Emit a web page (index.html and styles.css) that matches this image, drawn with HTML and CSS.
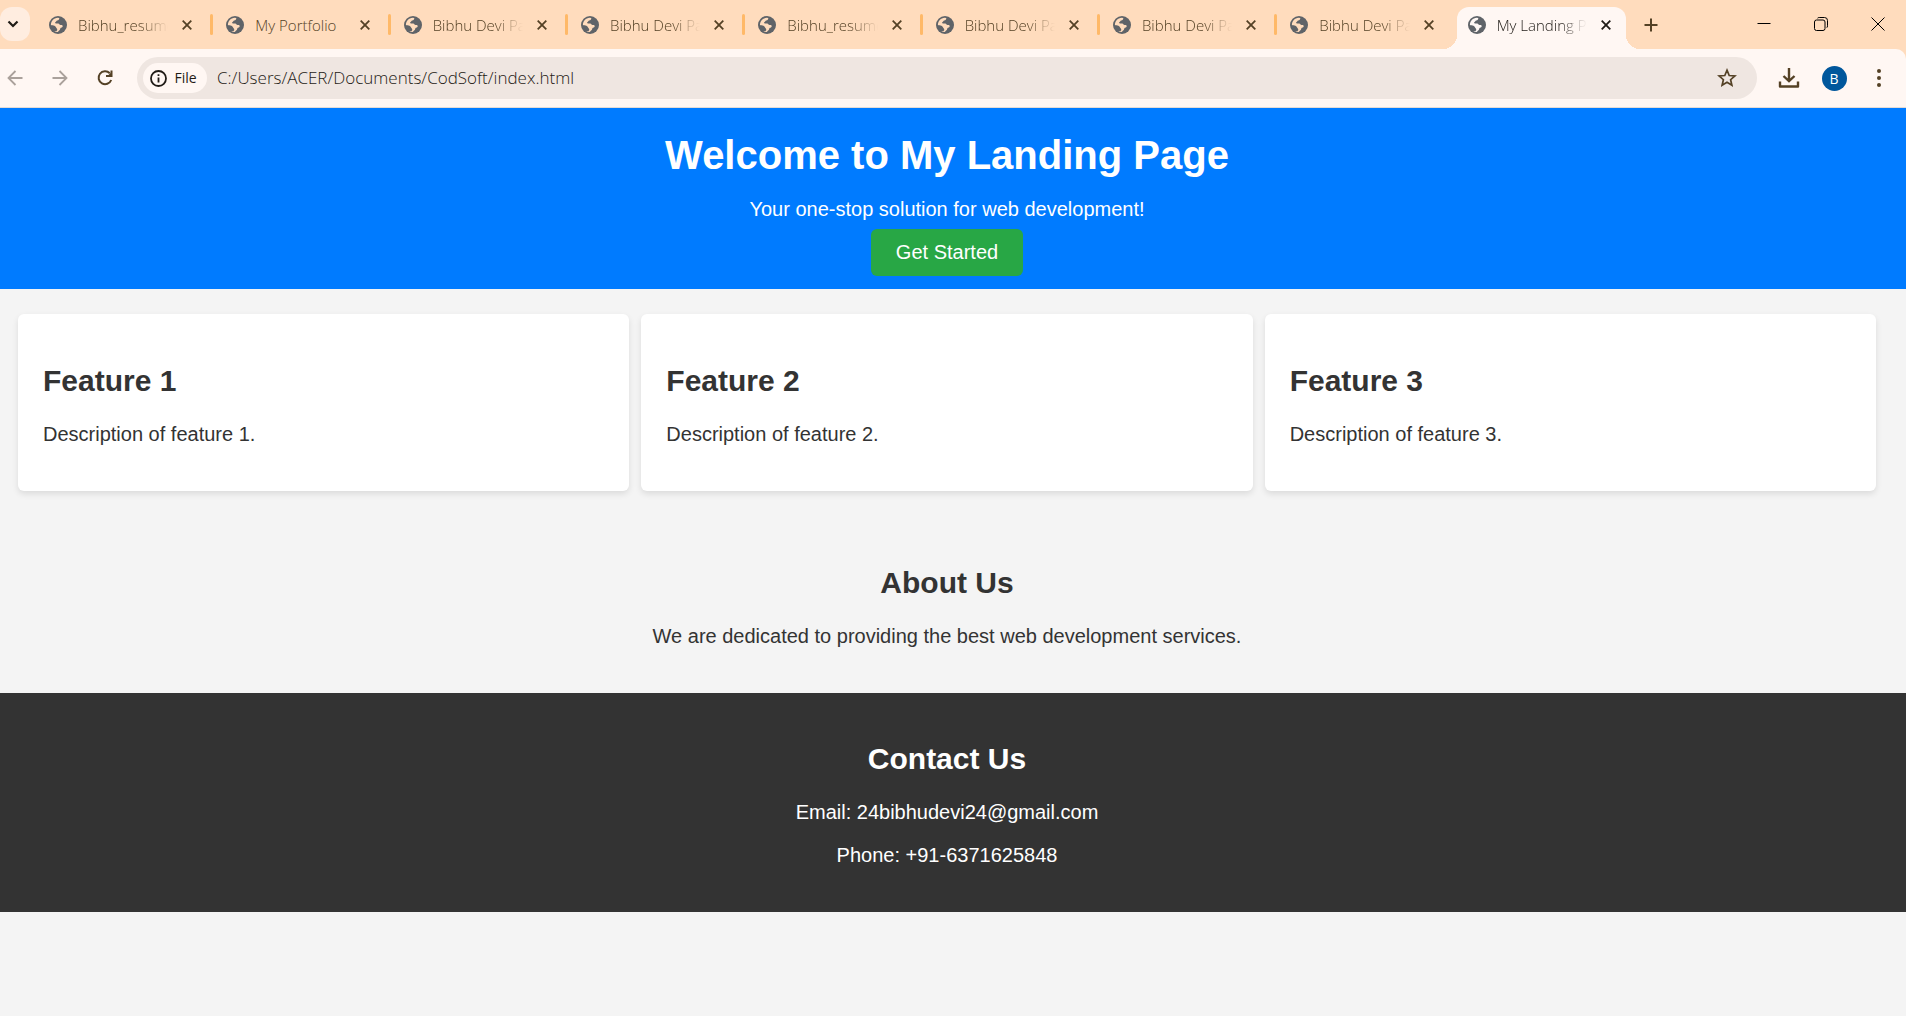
FILE: index.html
```html
<!DOCTYPE html>
<html lang="en">
<head>
<meta charset="utf-8">
<meta name="viewport" content="width=device-width, initial-scale=1">
<title>My Landing Page</title>
<link rel="stylesheet" href="styles.css">
</head>
<body>
<svg class="defs" aria-hidden="true">
  <symbol id="globe" viewBox="0 0 18 18">
    <circle cx="9" cy="9" r="9" fill="#5f6368"/>
    <path d="M1.900 8.900C1.900 5.200 4.800 2 8.700 1.800L10.300 2C10.300 3.400 9.600 4.300 8.200 4.400C7.300 4.500 7.300 5.600 6.500 6.100C5.700 6.600 6.100 7.400 7 7.400H9.300C10.100 7.400 10.300 8.300 10.900 8.700C11.600 9.100 13 8.600 13.500 9.400C14.200 10.600 13.200 11.600 12 11.800C11.200 12 11.400 13 10.900 13.700C10.400 14.400 9.300 14.600 9 16.100C7.700 16.100 6.300 15.700 5.200 15L7.500 14.900C8.600 14.500 8.300 13.200 7.800 12.500C7 11.600 6.700 10.300 5.400 9.700C4.300 9.200 3.100 9.400 1.900 8.900Z" fill="var(--tab)"/>
  </symbol>
  <symbol id="cross" viewBox="0 0 10 10">
    <path d="M.7.7 9.300 9.300M9.300.7.7 9.300" fill="none" stroke="currentColor" stroke-width="1.800"/>
  </symbol>
</svg>

<div class="browser">
  <div class="tabstrip">
    <button class="tab-search" aria-label="Search tabs"><svg width="12" height="8" viewBox="0 0 12 8"><path d="M1.500 1.500 6 6 10.500 1.500" fill="none" stroke="currentColor" stroke-width="2.200"/></svg></button>
    <div class="tabs">
      <div class="tab"><svg class="globe"><use href="#globe"/></svg><span class="tab-title fade">Bibhu_resume</span><button class="tab-close" aria-label="Close tab"><svg><use href="#cross"/></svg></button></div>
      <div class="tab"><svg class="globe"><use href="#globe"/></svg><span class="tab-title">My Portfolio</span><button class="tab-close" aria-label="Close tab"><svg><use href="#cross"/></svg></button></div>
      <div class="tab"><svg class="globe"><use href="#globe"/></svg><span class="tab-title fade">Bibhu Devi Pati</span><button class="tab-close" aria-label="Close tab"><svg><use href="#cross"/></svg></button></div>
      <div class="tab"><svg class="globe"><use href="#globe"/></svg><span class="tab-title fade">Bibhu Devi Pati</span><button class="tab-close" aria-label="Close tab"><svg><use href="#cross"/></svg></button></div>
      <div class="tab"><svg class="globe"><use href="#globe"/></svg><span class="tab-title fade">Bibhu_resume</span><button class="tab-close" aria-label="Close tab"><svg><use href="#cross"/></svg></button></div>
      <div class="tab"><svg class="globe"><use href="#globe"/></svg><span class="tab-title fade">Bibhu Devi Pati</span><button class="tab-close" aria-label="Close tab"><svg><use href="#cross"/></svg></button></div>
      <div class="tab"><svg class="globe"><use href="#globe"/></svg><span class="tab-title fade">Bibhu Devi Pati</span><button class="tab-close" aria-label="Close tab"><svg><use href="#cross"/></svg></button></div>
      <div class="tab"><svg class="globe"><use href="#globe"/></svg><span class="tab-title fade">Bibhu Devi Pati</span><button class="tab-close" aria-label="Close tab"><svg><use href="#cross"/></svg></button></div>
      <div class="tab active"><svg class="globe"><use href="#globe"/></svg><span class="tab-title fade">My Landing Page</span><button class="tab-close" aria-label="Close tab"><svg><use href="#cross"/></svg></button></div>
    </div>
    <button class="new-tab" aria-label="New tab"><svg width="14" height="14" viewBox="0 0 14 14"><path d="M7 .5V13.500M.5 7H13.500" stroke="currentColor" stroke-width="2"/></svg></button>
    <div class="window-controls">
      <button aria-label="Minimize"><svg width="14" height="14" viewBox="0 0 14 14"><path d="M.5 6.500H13.500" stroke="currentColor"/></svg></button>
      <button aria-label="Restore"><svg width="14" height="14" viewBox="0 0 14 14" fill="none" stroke="currentColor"><rect x=".5" y="3" width="10.500" height="10.500" rx="2"/><path d="M3.500 1.200Q4 .5 5.200 .5H10.500A3 3 0 0 1 13.500 3.500V8.800Q13.500 10.300 12.800 10.700"/></svg></button>
      <button aria-label="Close"><svg width="14" height="14" viewBox="0 0 14 14"><path d="M.5.5 13.500 13.500M13.500.5.5 13.500" stroke="currentColor"/></svg></button>
    </div>
  </div>
  <div class="toolbar">
    <div class="toolbar-group nav">
      <button class="muted" aria-label="Back"><svg width="16" height="16" viewBox="0 0 16 16" fill="none" stroke="currentColor" stroke-width="1.800"><path d="M8.500 1 1.500 8 8.500 15M1.500 8H15.500"/></svg></button>
      <button class="muted" aria-label="Forward"><svg width="16" height="16" viewBox="0 0 16 16" fill="none" stroke="currentColor" stroke-width="1.800"><path d="M7.500 1 14.500 8 7.500 15M14.500 8H.5"/></svg></button>
      <button aria-label="Reload"><svg width="16" height="16" viewBox="0 0 16 16"><path d="M12.800 3.200A6.500 6.500 0 1 0 14.200 10" fill="none" stroke="currentColor" stroke-width="2"/><path d="M15.500.5V7H9V5H11.500L13.500 3V.5Z" fill="currentColor"/></svg></button>
    </div>
    <div class="address">
      <button class="chip"><svg width="17" height="17" viewBox="0 0 17 17"><circle cx="8.500" cy="8.500" r="7.500" fill="none" stroke="currentColor" stroke-width="1.800"/><path d="M8.500 7.500V12.500M8.500 4.300V6" stroke="currentColor" stroke-width="1.800"/></svg>File</button>
      <input class="url" type="text" aria-label="Address" value="C:/Users/ACER/Documents/CodSoft/index.html">
      <button class="star" aria-label="Bookmark this page"><svg width="20" height="20" viewBox="0 0 20 20"><path d="M10 2.200 12.200 7.500 17.900 8 13.600 11.700 14.900 17.300 10 14.300 5.100 17.300 6.400 11.700 2.100 8 7.800 7.500Z" fill="none" stroke="currentColor" stroke-width="1.700"/></svg></button>
    </div>
    <div class="toolbar-group actions">
      <button aria-label="Downloads"><svg width="22" height="22" viewBox="0 0 22 22" fill="none" stroke="currentColor" stroke-width="2.400"><path d="M11 1V14M5.500 9 11 14.200 16.500 9"/><path d="M2 14.500V19.500H20V14.500" stroke-linejoin="round"/></svg></button>
      <button class="avatar-button" aria-label="Profile"><span class="avatar">B</span></button>
      <button aria-label="Menu"><svg width="4" height="18" viewBox="0 0 4 18" fill="currentColor"><circle cx="2" cy="2" r="2"/><circle cx="2" cy="9" r="2"/><circle cx="2" cy="16" r="2"/></svg></button>
    </div>
  </div>
</div>

<header class="hero">
  <h1>Welcome to My Landing Page</h1>
  <p>Your one-stop solution for web development!</p>
  <a class="cta" href="#features">Get Started</a>
</header>

<main>
  <section class="features" id="features">
    <article class="feature"><h2>Feature 1</h2><p>Description of feature 1.</p></article>
    <article class="feature"><h2>Feature 2</h2><p>Description of feature 2.</p></article>
    <article class="feature"><h2>Feature 3</h2><p>Description of feature 3.</p></article>
  </section>
  <section class="band about">
    <h2>About Us</h2>
    <p>We are dedicated to providing the best web development services.</p>
  </section>
</main>

<footer class="band contact">
  <h2>Contact Us</h2>
  <p>Email: 24bibhudevi24@gmail.com</p>
  <p>Phone: +91-6371625848</p>
</footer>
</body>
</html>
```
FILE: styles.css
```css
* { box-sizing: border-box; }

body {
  margin: 0;
  background: #f4f4f4;
  color: #333;
  font: 20px/23px "Liberation Sans", Arial, sans-serif;
}

button {
  display: flex;
  align-items: center;
  justify-content: center;
  padding: 0;
  border: 0;
  background: none;
  color: inherit;
  font: inherit;
}

.defs { display: none; }

/* Browser frame */
.browser {
  --strip: #ffdcbd;
  --surface: #fff7f3;
  background: var(--strip);
  color: #544125;
  font: 14px/20px "Open Sans", "Noto Sans", sans-serif;
}

.tabstrip { display: flex; height: 49px; }

.tab-search {
  width: 30px;
  height: 34px;
  margin: 7px 5px 0 0;
  padding-right: 4px;
  border-radius: 12px;
  background: #ffede0;
  color: #1f1b16;
}

.tabs { display: flex; flex: 1; min-width: 0; }

.tab {
  --tab: var(--strip);
  position: relative;
  display: flex;
  flex: 1 1 0;
  align-items: center;
  min-width: 0;
  padding: 0 20px 0 14px;
}

.tab:not(.active):not(:nth-last-child(2))::after {
  content: "";
  position: absolute;
  top: 14px;
  right: -1px;
  width: 3px;
  height: 21px;
  border-radius: 2px;
  background: #ffb968;
}

.globe { flex: none; width: 18px; height: 18px; }

.tab-title {
  flex: 1;
  min-width: 0;
  margin: 0 14px 0 11px;
  overflow: hidden;
  font-size: 15px;
  font-weight: 300;
  white-space: nowrap;
}

.fade {
  -webkit-mask-image: linear-gradient(to left, transparent, #000 28px);
  mask-image: linear-gradient(to left, transparent, #000 28px);
}

.tab-close svg { width: 10px; height: 10px; }

.tab.active { --tab: var(--surface); color: #1f1b16; }
.tab.active > * { z-index: 1; }

.tab.active::before {
  content: "";
  position: absolute;
  inset: 7px 5px 0 3px;
  border-radius: 12px 12px 0 0;
  background: var(--surface);
}

.tab.active::after {
  content: "";
  position: absolute;
  right: -9px;
  bottom: 0;
  left: -11px;
  height: 14px;
  background:
    radial-gradient(circle at 0 0, transparent 14px, var(--surface) 14px) left / 14px 14px no-repeat,
    radial-gradient(circle at 100% 0, transparent 14px, var(--surface) 14px) right / 14px 14px no-repeat;
}

.new-tab { width: 40px; margin-right: 64px; }
.window-controls { display: flex; color: #000; }
.window-controls button { width: 57px; height: 47px; }

.toolbar {
  display: flex;
  padding: 8px 12px 8px 0;
  border-bottom: 1px solid #e3dbd6;
  border-radius: 0 10px 0 0;
  background: var(--surface);
}

.toolbar-group { display: flex; gap: 15px; }
.toolbar-group button { width: 30px; }
.nav { margin-right: 17px; }
.actions { margin-left: 17px; }
.muted { color: #aaa19b; }

.address {
  display: flex;
  flex: 1;
  align-items: center;
  min-width: 0;
  height: 42px;
  padding: 0 20px 0 6px;
  border-radius: 21px;
  background: #efe6e1;
}

.chip {
  gap: 7px;
  width: 64px;
  height: 30px;
  padding-right: 3px;
  border-radius: 15px;
  background: var(--surface);
  color: #1f1b16;
}

.url {
  flex: 1;
  min-width: 0;
  margin-left: 10px;
  padding: 0;
  border: 0;
  outline: 0;
  background: none;
  color: #1f1b16;
  font: 300 17px/24px "Open Sans", "Noto Sans", sans-serif;
}

.avatar {
  width: 25px;
  height: 25px;
  border-radius: 50%;
  background: #00579c;
  color: #fff;
  font-size: 14px;
  line-height: 25px;
}

/* Landing page */
h1, h2 { margin: 0; }
h1 { font-size: 40px; line-height: 46px; }
h2 { margin: 25px 0; font-size: 30px; line-height: 34px; }
p { margin: 20px 0; }

.hero {
  padding: 24px 12px 13px 0;
  background: #007bff;
  color: #fff;
  text-align: center;
}

.hero p { margin: 20px 0 8px; }

.cta {
  display: block;
  width: fit-content;
  margin: 0 auto;
  padding: 12px 25px;
  border-radius: 6px;
  background: #28a745;
  color: #fff;
  text-decoration: none;
}

.features {
  display: grid;
  grid-template-columns: repeat(3, 1fr);
  gap: 12px;
  padding: 25px 30px 25px 18px;
}

.feature {
  display: flow-root;
  padding: 25px;
  border-radius: 6px;
  background: #fff;
  box-shadow: 0 3px 6px rgba(0, 0, 0, 0.1);
}

.band {
  display: flow-root;
  padding: 25px 37px 25px 25px;
  text-align: center;
}

.contact { padding-top: 24px; background: #333; color: #fff; }
```
